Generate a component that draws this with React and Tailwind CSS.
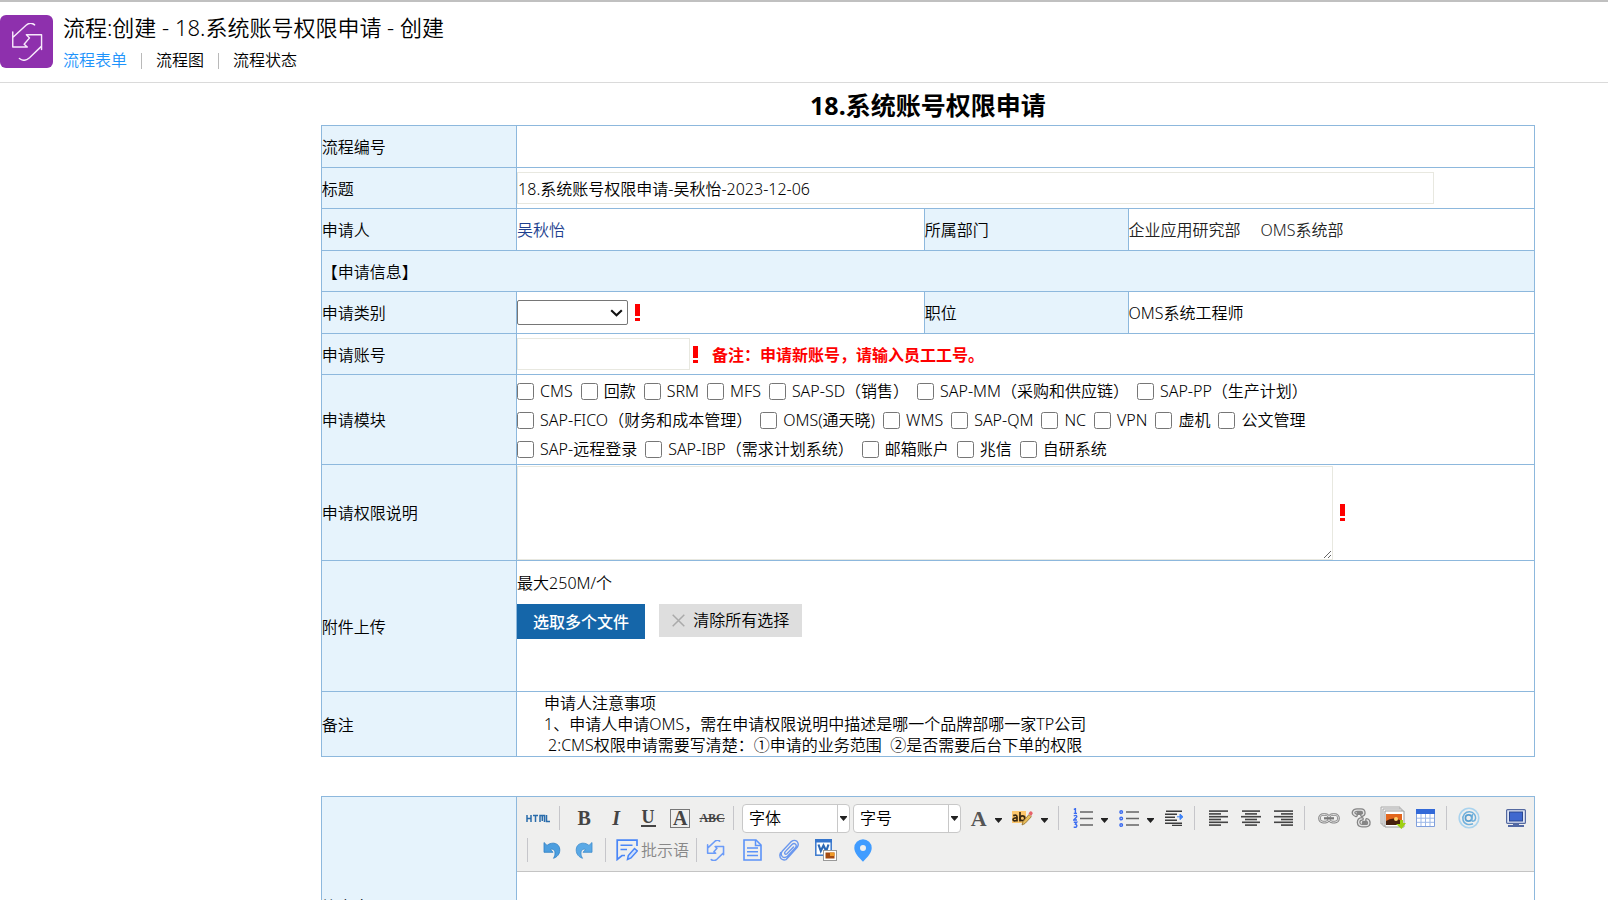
import React from 'react';

const LINE = 'border border-[#8db8dd]';

function Svg({ w = 20, h = 20, box, children, className = '' }) {
  return (
    <svg width={w} height={h} viewBox={box || `0 0 ${w} ${h}`} fill="none" aria-hidden="true" className={`block shrink-0 ${className}`}>
      {children}
    </svg>
  );
}

function FlowGlyph({ size, stroke, width }) {
  return (
    <Svg w={size} h={size} box="0 0 100 120">
      <g stroke={stroke} strokeWidth={width} strokeLinecap="round" strokeLinejoin="round">
        <path d="M74 6C66-1 55 0 47 7L5 46M5 28V76H51L41 67L58 47L48 37H96V84M96 73L58 110C48 119 36 120 26 112" />
      </g>
    </Svg>
  );
}

function Label({ children, htmlFor }) {
  return (
    <th scope="row" className={`${LINE} bg-[#e6f3fc] px-0 pt-0.5 pb-0 text-left font-[350]`}>
      {htmlFor ? <label htmlFor={htmlFor}>{children}</label> : children}
    </th>
  );
}

function Cell({ children, span, className = 'p-0' }) {
  return (
    <td colSpan={span} className={`${LINE} ${className}`}>
      {children}
    </td>
  );
}

function Required() {
  return (
    <Svg w={5} h={17}>
      <path d="M0 0H5V12H0ZM0 14H5V17H0Z" fill="#fe0000" />
    </Svg>
  );
}

const MODULES = [
  ['CMS', '回款', 'SRM', 'MFS', 'SAP-SD（销售）', 'SAP-MM（采购和供应链）', 'SAP-PP（生产计划）'],
  ['SAP-FICO（财务和成本管理）', 'OMS(通天晓)', 'WMS', 'SAP-QM', 'NC', 'VPN', '虚机', '公文管理'],
  ['SAP-远程登录', 'SAP-IBP（需求计划系统）', '邮箱账户', '兆信', '自研系统'],
];

function Tool({ label, children, className = 'w-8' }) {
  return (
    <button type="button" aria-label={label} title={label} className={`flex h-8 shrink-0 items-center justify-center ${className}`}>
      {children}
    </button>
  );
}

function DropTool({ label, children }) {
  return (
    <Tool label={label} className="w-[46px] gap-2">
      {children}
      <Caret />
    </Tool>
  );
}

function Caret() {
  return (
    <Svg w={7} h={5} className="mt-1">
      <path d="M0 0H7V1L3.5 5L0 1Z" fill="#222" />
    </Svg>
  );
}

function Sep() {
  return <span className="mr-2 ml-[5px] h-6 w-px shrink-0 bg-[#c6c6ca]" />;
}

function ToolSelect({ label }) {
  return (
    <div className="relative h-[29px] w-[108px] shrink-0">
      <select aria-label={label} className="h-full w-full appearance-none rounded-sm border border-[#c8c8c8] bg-white pl-1.5 text-base font-[350]">
        <option>{label}</option>
      </select>
      <span className="pointer-events-none absolute inset-y-px right-px flex w-3 items-center justify-center border-l border-[#c8c8c8]">
        <Svg w={7} h={5}>
          <path d="M0 0H7V1L3.5 5L0 1Z" fill="#222" />
        </Svg>
      </span>
    </div>
  );
}

function Lines({ rows }) {
  return (
    <Svg w={20} h={16}>
      {rows.map(([x, w], i) => (
        <rect key={i} x={x} y={i * 2.8 + 0.3} width={w} height="1.6" fill="#444" />
      ))}
    </Svg>
  );
}

function EditorToolbar() {
  return (
    <div className="border-b border-[#c4c4c4] bg-[#efefee] py-[5px]">
      <div className="flex items-center pl-[5px]">
        <Tool label="HTML">
          <Svg w={24} h={9}>
            <path d="M1 1V8M1 4.5H5M5 1V8M7 1.5H12M9.5 1.5V8M14 8V1.5H18.5V8M16.3 1.5V7M20.5 1V7.5H24" stroke="#2a6cab" strokeWidth="1.5" />
          </Svg>
        </Tool>
        <Sep />
        <Tool label="粗体"><span className="font-[Liberation_Serif,serif] text-xl font-bold text-[#444]">B</span></Tool>
        <Tool label="斜体"><span className="font-[Liberation_Serif,serif] text-xl font-bold text-[#444] italic">I</span></Tool>
        <Tool label="下划线"><span className="border-b-2 border-[#444] px-px font-[Liberation_Serif,serif] text-lg leading-4 font-bold text-[#444]">U</span></Tool>
        <Tool label="边框"><span className="flex h-[19px] w-5 items-center justify-center border border-[#777] font-[Liberation_Serif,serif] text-xl leading-4 font-bold text-[#444]">A</span></Tool>
        <Tool label="删除线">
          <span className="font-[Liberation_Serif,serif] text-xs font-bold text-[#444] line-through">ABC</span>
        </Tool>
        <Sep />
        <div className="flex gap-[3px]">
          <ToolSelect label="字体" />
          <ToolSelect label="字号" />
        </div>
        <DropTool label="文字颜色">
          <span className="w-5 pl-1 font-[Liberation_Serif,serif] text-[22px] font-bold text-[#555]">A</span>
        </DropTool>
        <DropTool label="背景颜色">
          <Svg w={21} h={16}>
            <rect y="1" width="14" height="12" fill="#fdc76c" />
            <g stroke="#3b2a12" strokeWidth="1.7">
              <path d="M1.2 5.6Q5 4.2 5 7V11.5M5 8Q1 7.6 1 9.7Q1.4 11.8 5 10.2M8 2V11.5" />
              <circle cx="10.4" cy="8.3" r="2.4" />
            </g>
            <path d="M10 15L11 11.5L17 4.5L19.3 6.8L13 13.5Z" fill="#e8bd5a" stroke="#8d6b2c" strokeWidth=".8" />
            <path d="M16.5 3.5L18 1.4Q20 .8 20.8 3.2L19.3 6Z" fill="#e8626a" />
          </Svg>
        </DropTool>
        <Sep />
        <DropTool label="编号列表">
          <Svg w={20} h={20}>
            <path d="M7 4H20M7 10.5H20M7 17H20" stroke="#666" strokeWidth="1.6" />
            <path d="M.8 1.5L2.4.6V5.4M.8 5.4H4M.7 8Q3.8 6.4 3.8 8.7L.8 12H4M.8 14.2H3.8L2.3 16.2Q5 17.3 3 19.2H.7" stroke="#3c6cf0" strokeWidth="1.4" />
          </Svg>
        </DropTool>
        <DropTool label="项目列表">
          <Svg w={20} h={20}>
            <path d="M7 4H20M7 10.5H20M7 17H20" stroke="#666" strokeWidth="1.6" />
            <g stroke="#3c6cf0" strokeWidth="1.4">
              <circle cx="2.2" cy="4" r="1.3" />
              <circle cx="2.2" cy="10.5" r="1.3" />
              <circle cx="2.2" cy="17" r="1.3" />
            </g>
          </Svg>
        </DropTool>
        <Tool label="缩进" className="w-[30px]">
          <Svg w={19} h={16}>
            <path d="M1 1.3H17M0 4.3H12M0 7.3H10M0 10.3H12M0 13.3H17M7 15.5H17" stroke="#3c3c3c" strokeWidth="1.6" />
            <path d="M12 6.8H15M15 4L18 6.8L15 9.6Z" fill="#3f83f8" stroke="#3f83f8" />
          </Svg>
        </Tool>
        <Sep />
        <Tool label="左对齐"><Lines rows={[[0, 19], [0, 12], [0, 19], [0, 12], [0, 19], [0, 12]]} /></Tool>
        <Tool label="居中"><Lines rows={[[1, 18], [4, 12], [0, 20], [4, 12], [1, 18], [4, 12]]} /></Tool>
        <Tool label="右对齐"><Lines rows={[[1, 19], [8, 12], [1, 19], [8, 12], [1, 19], [8, 12]]} /></Tool>
        <Sep />
        <Tool label="链接">
          <Svg w={22} h={11}>
            <rect x="1.5" y="1.5" width="9.5" height="7.6" rx="3.6" stroke="#858585" strokeWidth="2.6" />
            <rect x="11" y="1.5" width="9.5" height="7.6" rx="3.6" stroke="#858585" strokeWidth="2.6" />
            <rect x="1.5" y="1.5" width="9.5" height="7.6" rx="3.6" stroke="#dcdcdc" />
            <rect x="11" y="1.5" width="9.5" height="7.6" rx="3.6" stroke="#dcdcdc" />
            <path d="M6 5.3H16" stroke="#777" strokeWidth="2.2" />
          </Svg>
        </Tool>
        <Tool label="取消链接">
          <Svg w={20} h={20}>
            <g stroke="#858585" strokeWidth="3.8" strokeLinecap="round">
              <path d="M5 7.3Q2 6 2.6 4.1Q3.4 2.2 6 2.2H10Q12.8 2.2 12.8 5Q12.8 6.6 11 7.2M7.5 5H9" />
              <path d="M11 10.8Q7.6 11 7.6 14.5Q7.8 17.6 11 17.6H15Q18 17.6 17.8 14.5Q17.6 12.4 16 12M12.6 14.6H14" />
            </g>
            <g stroke="#e3e3e3" strokeWidth="1.3" strokeLinecap="round">
              <path d="M5 7.3Q2 6 2.6 4.1Q3.4 2.2 6 2.2H10Q12.8 2.2 12.8 5Q12.8 6.6 11 7.2" />
              <path d="M11 10.8Q7.6 11 7.6 14.5Q7.8 17.6 11 17.6H15Q18 17.6 17.8 14.5Q17.6 12.4 16 12" />
            </g>
          </Svg>
        </Tool>
        <Tool label="图片">
          <Svg w={26} h={24}>
            <path d="M1 1H20V18H1Z" fill="#eee" stroke="#aaa" />
            <path d="M3 3H22V20H3Z" fill="#f5f5f5" stroke="#aaa" />
            <path d="M5 5H24V21H5Z" fill="#fff" stroke="#999" />
            <path d="M6 8H22V19H6Z" fill="#e2661d" />
            <path d="M6 15Q13 10 22 15V19H6Z" fill="#47200d" />
            <circle cx="16" cy="13" r="2" fill="#ffd36b" />
            <path d="M20 14H23V17H26L21.5 23L16 18H20Z" fill="#9fd012" />
          </Svg>
        </Tool>
        <Tool label="表格">
          <Svg w={19} h={18}>
            <path d="M.5 .5H18.5V17.5H.5Z" fill="#fff" stroke="#7f9fdc" />
            <path d="M0 0H19V5H0Z" fill="#3269d8" />
            <path d="M5 5V17M9.5 5V17M14 5V17M1 9.2H18M1 13.3H18" stroke="#9db8e8" />
          </Svg>
        </Tool>
        <Sep />
        <Tool label="提及" className="w-7">
          <Svg w={22} h={22}>
            <circle cx="11" cy="11" r="9.8" stroke="#a9d3ee" strokeWidth="1.6" />
            <circle cx="10.6" cy="11" r="3.2" stroke="#5a9fd0" strokeWidth="1.7" />
            <path d="M14.6 7L13.6 12.5Q13.6 14.6 15.6 14.1C18 13.4 18.2 9.8 16.5 7.4C14 4 9 4 6.4 7C3.5 10.5 4.8 16 9 17.2Q12 18 15 16.8" stroke="#6fb0dc" strokeWidth="1.5" />
          </Svg>
        </Tool>
        <Tool label="全屏" className="mr-2 ml-auto w-5">
          <Svg w={20} h={18}>
            <rect x=".6" y=".6" width="18.8" height="13.8" rx="1" fill="#dfe6f6" stroke="#5469a0" strokeWidth="1.2" />
            <rect x="3.5" y="3" width="13" height="9" fill="#3f68cf" stroke="#2b478f" />
            <path d="M7 15H13V16H18V18H2V16H7Z" fill="#5269a5" />
          </Svg>
        </Tool>
      </div>
      <div className="flex items-center pl-[5px]">
        <Sep />
        <Tool label="撤销">
          <Svg w={18} h={18}>
            <path d="M1 1.5L4 4.4C9 .2 16.8 2 16.8 8.8C16.8 13.5 14 16 10.5 17.3C12.6 14 12.8 9 9.4 8.2Q8.4 8 7.5 8.6L10 11.3H1Z" fill="#4c9edf" stroke="#2d7fc4" strokeWidth=".8" />
          </Svg>
        </Tool>
        <Tool label="重做">
          <Svg w={18} h={18}>
            <path d="M17 1.5L14 4.4C9 .2 1.2 2 1.2 8.8C1.2 13.5 4 16 7.5 17.3C5.4 14 5.2 9 8.6 8.2Q9.6 8 10.5 8.6L8 11.3H17Z" fill="#5aa9e6" stroke="#3c8bcb" strokeWidth=".8" />
          </Svg>
        </Tool>
        <Sep />
        <button type="button" className="flex h-8 shrink-0 items-center gap-[3px] px-0.5 text-base font-[350] text-[#888]">
          <Svg w={22} h={22}>
            <path d="M21 7V1.2H1.2V20.5L6 16.5H9" stroke="#4a86f7" strokeWidth="1.7" />
            <path d="M4.5 6.2H16.5M4.5 10.5H11" stroke="#4a86f7" strokeWidth="1.5" />
            <path d="M11.5 20.5L12.3 16.5L18.5 9.5L21.3 12L15 19Z" stroke="#4a86f7" strokeWidth="1.5" fill="#cfe0fd" />
          </Svg>
          批示语
        </button>
        <Sep />
        <div className="flex items-center gap-[17px]">
          <Tool label="流程" className="w-5"><FlowGlyph size={21} stroke="#6b9bf8" width={9} /></Tool>
          <Tool label="文档" className="w-5">
            <Svg w={19} h={22}>
              <path d="M1 1H13L18 6V21H1Z" stroke="#5c93f8" strokeWidth="1.6" />
              <path d="M12.5 1V6.5H18M4 9H15M4 12.7H15M4 16.5H15" stroke="#5c93f8" strokeWidth="1.5" />
            </Svg>
          </Tool>
          <Tool label="附件" className="w-5">
            <Svg w={20} h={22}>
              <path d="M14.5 8L8 14.7Q6.6 15.8 5.9 14.8Q5.2 13.8 6.3 12.6L13 5.5Q15 3.8 16.6 5.2Q18 6.8 16.4 8.8L8.5 17.2Q5.6 19.6 3.2 17.4Q1 15 3.4 12L12.3 2.6Q15.2.2 18 2.4Q20.4 5 18.2 8.4L10 17.6L7 20.6Q4.5 21.6 2.5 20Q-.3 17.3 1.6 13.6" stroke="#6b98ee" strokeWidth="1.4" strokeLinecap="round" />
            </Svg>
          </Tool>
          <Tool label="导入Word" className="w-5">
            <Svg w={22} h={22}>
              <rect x=".8" y=".8" width="15.4" height="15.4" fill="#fff" stroke="#3a78cc" strokeWidth="1.5" />
              <path d="M0 0H17V3.5H0Z" fill="#3575cd" />
              <path d="M3.5 5.5L5.8 12L8.5 6.5L11.2 12L13.5 5.5" stroke="#2c68b5" strokeWidth="2.2" />
              <rect x="8.5" y="11.5" width="13" height="10" fill="#fff" stroke="#999" />
              <rect x="10.5" y="13.5" width="9" height="6" fill="#a54a10" />
              <path d="M15 13.5H19.5V17H15Z" fill="#f09a28" />
            </Svg>
          </Tool>
          <Tool label="位置" className="w-5">
            <Svg w={18} h={23}>
              <path fillRule="evenodd" d="M9 .3A8.7 8.7 0 0 1 17.7 9C17.7 14 13.5 18 9 22.8C4.5 18 .3 14 .3 9A8.7 8.7 0 0 1 9 .3ZM9 6A3 3 0 1 0 9 12A3 3 0 0 0 9 6Z" fill="#409cff" />
            </Svg>
          </Tool>
        </div>
      </div>
    </div>
  );
}

function Columns() {
  return (
    <colgroup>
      <col className="w-[16.1%]" />
      <col className="w-[33.6%]" />
      <col className="w-[16.8%]" />
      <col className="w-[33.5%]" />
    </colgroup>
  );
}

export default function App() {
  const box = 'border border-[#e8e8e0] bg-white';
  return (
    <div className="h-screen overflow-y-auto border-t-2 border-[#c0c0c0] bg-white font-['Noto_Sans','Noto_Sans_CJK_SC',sans-serif] text-base leading-[21px] font-[350] text-black [scrollbar-width:none]">
      <header className="flex border-b border-[#dadada] pt-[13px] pb-[11px]">
        <div className="flex size-[53px] shrink-0 items-center justify-center rounded-md bg-[#8e30ad]">
          <FlowGlyph size={38} stroke="#f7e9fb" width={4.5} />
        </div>
        <div className="-mt-0.5 ml-2.5">
          <h1 className="text-[22px] leading-7">流程:创建 - 18.系统账号权限申请 - 创建</h1>
          <nav className="mt-[9px] flex items-center">
            <a href="#form" className="text-[#1d93fb]">流程表单</a>
            <span className="mx-3.5 h-4 w-px bg-[#b9b9b9]" />
            <a href="#chart">流程图</a>
            <span className="mx-3.5 h-4 w-px bg-[#b9b9b9]" />
            <a href="#status">流程状态</a>
          </nav>
        </div>
      </header>

      <main id="form" className="mr-[73px] ml-[19.95%]">
        <h2 className="pt-1 pb-0.5 text-center text-[25px] leading-9 font-bold">18.系统账号权限申请</h2>

        <table className="w-full table-fixed border-collapse">
          <Columns />
          <tbody>
            <tr className="h-[42px]">
              <Label>流程编号</Label>
              <Cell span={3} />
            </tr>
            <tr className="h-[41px]">
              <Label htmlFor="title">标题</Label>
              <Cell span={3}>
                <input id="title" defaultValue="18.系统账号权限申请-吴秋怡-2023-12-06" className={`${box} block h-8 w-[90.2%]`} />
              </Cell>
            </tr>
            <tr className="h-[42px]">
              <Label>申请人</Label>
              <Cell className="pt-0.5"><a href="#user" className="text-[#1d3f8f]">吴秋怡</a></Cell>
              <Label>所属部门</Label>
              <Cell className="pt-0.5 text-[#222]">
                <div className="flex gap-5"><span>企业应用研究部</span><span>OMS系统部</span></div>
              </Cell>
            </tr>
            <tr className="h-[41px]">
              <Cell span={4} className="bg-[#e6f3fc] pt-0.5">【申请信息】</Cell>
            </tr>
            <tr className="h-[42px]">
              <Label htmlFor="category">申请类别</Label>
              <Cell>
                <div className="flex items-center gap-[7px]">
                  <div className="relative">
                    <select id="category" className="block h-[25px] w-[111px] appearance-none rounded-xs border border-[#767676] bg-white">
                      <option></option>
                    </select>
                    <Svg w={13} h={8} className="pointer-events-none absolute top-[9px] right-[5px]">
                      <path d="M1.2 1.2L6.5 6.3L11.8 1.2" stroke="#111" strokeWidth="2.1" />
                    </Svg>
                  </div>
                  <Required />
                </div>
              </Cell>
              <Label>职位</Label>
              <Cell className="pt-0.5">OMS系统工程师</Cell>
            </tr>
            <tr className="h-[41px]">
              <Label htmlFor="account">申请账号</Label>
              <Cell span={3}>
                <div className="flex items-center">
                  <input id="account" className={`${box} mr-[3px] h-8 w-[173px]`} />
                  <Required />
                  <strong className="ml-3.5 pt-0.5 font-bold text-[#fe0000]">备注：申请新账号，请输入员工工号。</strong>
                </div>
              </Cell>
            </tr>
            <tr className="h-[90px]">
              <Label>申请模块</Label>
              <Cell span={3} className="pt-px">
                {MODULES.map((row) => (
                  <div key={row[0]} className="flex h-[29px] items-center gap-2">
                    {row.map((name) => (
                      <label key={name} className="flex items-center gap-1.5 whitespace-nowrap">
                        <input type="checkbox" className="size-[17px]" />
                        {name}
                      </label>
                    ))}
                  </div>
                ))}
              </Cell>
            </tr>
            <tr className="h-24">
              <Label htmlFor="detail">申请权限说明</Label>
              <Cell span={3}>
                <div className="flex items-center gap-[7px]">
                  <textarea id="detail" className={`${box} block h-[94px] w-[80.2%] px-px`} />
                  <Required />
                </div>
              </Cell>
            </tr>
            <tr className="h-[131px]">
              <Label>附件上传</Label>
              <Cell span={3} className="pt-3 align-top">
                <p>最大250M/个</p>
                <div className="mt-2.5 flex items-start gap-3.5">
                  <button type="button" className="h-[35px] bg-[#1566a9] px-4 pt-0.5 font-medium text-white">选取多个文件</button>
                  <button type="button" className="flex h-[33px] items-center gap-2 bg-[#dedede] px-[13px]">
                    <Svg w={13} h={13}>
                      <path d="M.7 .7L12.3 12.3M12.3 .7L.7 12.3" stroke="#aaa" strokeWidth="1.5" />
                    </Svg>
                    清除所有选择
                  </button>
                </div>
              </Cell>
            </tr>
            <tr className="h-16">
              <Label>备注</Label>
              <Cell span={3} className="pt-px pl-[27px]">
                <p>申请人注意事项</p>
                <p>1、申请人申请OMS，需在申请权限说明中描述是哪一个品牌部哪一家TP公司</p>
                <p className="pl-1 whitespace-pre">2:CMS权限申请需要写清楚：①申请的业务范围  ②是否需要后台下单的权限</p>
              </Cell>
            </tr>
          </tbody>
        </table>

        <table className="mt-[39px] w-full table-fixed border-collapse">
          <Columns />
          <tbody>
            <tr className="h-[220px]">
              <Label htmlFor="opinion">签字意见</Label>
              <Cell span={3} className="p-0 align-top">
                <EditorToolbar />
                <textarea id="opinion" className="block h-36 w-full resize-none bg-white p-2" />
              </Cell>
            </tr>
          </tbody>
        </table>
      </main>
    </div>
  );
}
